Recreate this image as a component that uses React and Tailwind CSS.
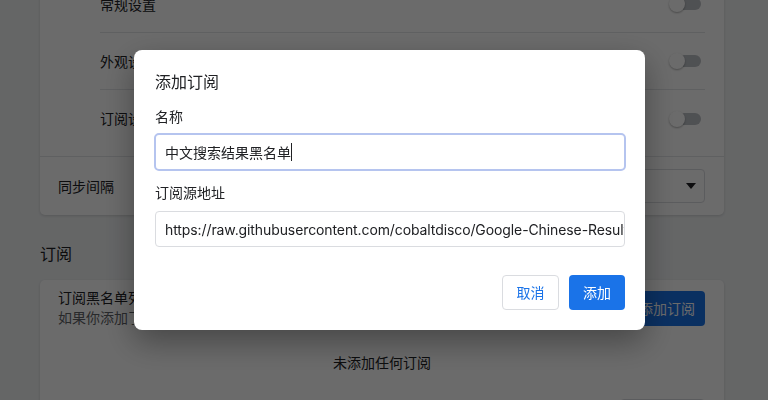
const Toggle = () => (
  <div className="relative flex items-center w-[32px] h-[16px]">
    <div className="ml-[4px] w-[28px] h-[12px] rounded-full bg-[#bdc1c6]" />
    <div className="absolute left-0 top-0 w-4 h-4 rounded-full bg-white shadow-[0_1px_2px_rgba(0,0,0,0.3)]" />
  </div>
);

const SettingRow = ({ label, last }) => (
  <div className={`flex items-center justify-between h-[57px] pr-[4px] ${last ? '' : 'border-b border-[#e3e5e8]'}`}>
    <span>{label}</span>
    <Toggle />
  </div>
);

const App = () => {
  return (
    <div
      className="relative min-h-[400px] bg-[#f1f3f4] text-[14px] text-[#202124] overflow-hidden"
      style={{ fontFamily: 'Inter, "Noto Sans CJK SC", sans-serif' }}
    >
      <div className="w-[684px] ml-[40px]">
        {/* general settings card */}
        <div className="-mt-[24px] bg-white rounded-[5px] shadow-[0_1px_3px_rgba(0,0,0,0.15)]">
          <div className="ml-[60px] mr-[19px] pb-[9px]">
            <SettingRow label="常规设置" />
            <SettingRow label="外观设置" />
            <SettingRow label="订阅设置" last />
          </div>
          <div className="flex items-center justify-between h-[59px] pl-[18px] pr-[19px] border-t border-[#e3e5e8]">
            <span>同步间隔</span>
            <div className="flex items-center justify-end w-[200px] h-[34px] pr-[8px] border border-[#dadce0] rounded-[4px]">
              <svg width="10" height="6" viewBox="0 0 10 6">
                <path d="M0 0h10L5 6z" fill="#202124" />
              </svg>
            </div>
          </div>
        </div>

        <h2 className="mt-[27px] mb-[14px] text-[16px] leading-[24px]">订阅</h2>

        {/* subscriptions card */}
        <div className="bg-white rounded-[5px] shadow-[0_1px_3px_rgba(0,0,0,0.15)] pb-[20px]">
          <div className="flex items-center justify-between pl-[18px] pr-[19px] pt-[8px]">
            <div>
              <div className="leading-[20px]">订阅黑名单列表</div>
              <div className="leading-[20px] text-[#5f6368]">如果你添加了订阅，黑名单会定期从订阅源同步</div>
            </div>
            <button className="h-[35px] px-[10px] rounded-[4px] bg-[#1a73e8] text-white">添加订阅</button>
          </div>
          <div className="mt-[25px] text-center leading-[20px]">未添加任何订阅</div>
          <div className="flex justify-end pr-[19px] mt-[26px]">
            <button className="h-[34px] w-[85px] rounded-[4px] border border-[#dadce0] bg-white text-[#1a73e8]">全部同步</button>
          </div>
        </div>
      </div>

      {/* modal overlay */}
      <div className="fixed inset-0 bg-black/[0.58] pl-[134px] pt-[50px]">
        <div className="w-[511px] h-[280px] bg-white rounded-[8px] shadow-[0_12px_32px_rgba(0,0,0,0.35)] px-[21px] pt-[20px]">
          <div className="text-[16px] leading-[24px]">添加订阅</div>
          <div className="mt-[13px] mb-[6px] leading-[20px]">名称</div>
          <div className="-ml-px flex items-center h-[38px] w-[472px] px-[9px] border-2 border-[#b5c4ef] rounded-[5px]">
            <span>中文搜索结果黑名单</span>
            <span className="w-px h-[18px] bg-[#202124]" />
          </div>
          <div className="mt-[12px] mb-[8px] leading-[20px]">订阅源地址</div>
          <div className="flex items-center h-[36px] w-[470px] px-[9px] border border-[#dadce0] rounded-[4px] overflow-hidden whitespace-nowrap tracking-[-0.1px]">
            https://raw.githubusercontent.com/cobaltdisco/Google-Chinese-Results-Blocklist/master/uBlacklist_subscription.txt
          </div>
          <div className="flex justify-end gap-[10px] mt-[28px] mr-[-1px]">
            <button className="h-[35px] w-[57px] rounded-[4px] border border-[#dadce0] text-[#1a73e8]">取消</button>
            <button className="h-[35px] w-[56px] rounded-[4px] bg-[#1a73e8] text-white">添加</button>
          </div>
        </div>
      </div>
    </div>
  );
};

export default App;
